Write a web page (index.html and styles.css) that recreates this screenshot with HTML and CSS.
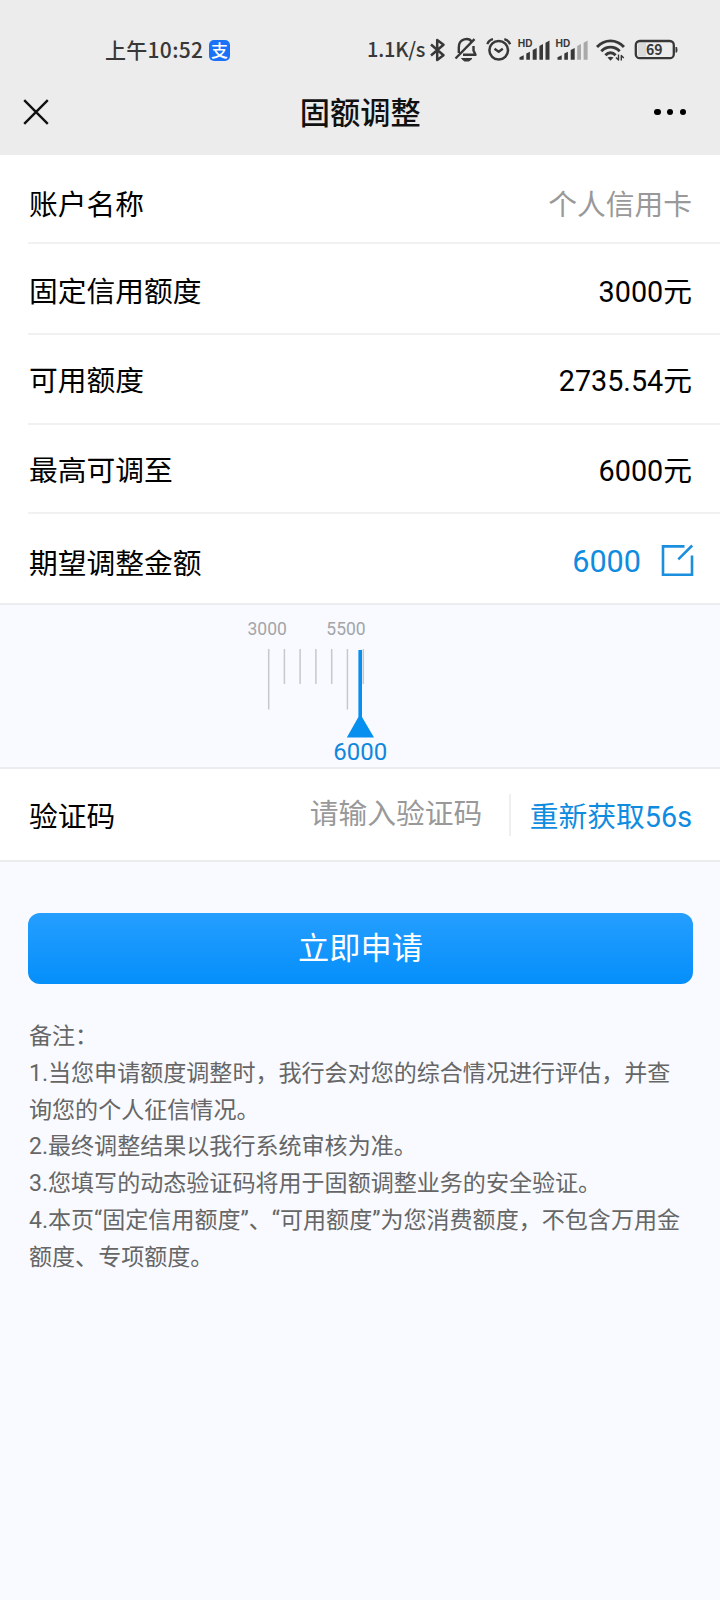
FILE: index.html
```html
<!DOCTYPE html>
<html lang="zh-CN">
<head>
<meta charset="utf-8">
<title>固额调整</title>
<link rel="stylesheet" href="styles.css">
</head>
<body>
<header class="top">
  <div class="status">
    <span class="time">上午10:52</span>
    <span class="pay-badge">支</span>
    <span class="speed">1.1K/s</span>
    <div class="status-icons">
      <svg class="ic" width="20" height="28" viewBox="428 36 20 28"><path d="M431 44.5 443.5 55.3 437.2 60V40L443.5 44.7 431 55.5" fill="none" stroke-width="2.5"/></svg>
      <svg class="ic bell" width="26" height="28" viewBox="453 36 26 28"><path d="M474.5 39.2 455.5 58.5M458.8 53V47.5C458.8 38 469 37.5 471.5 41.5M473.5 46V50.5L475.5 54.8H463" fill="none" stroke-width="2.4"/><path d="M461.5 58.5H472L469 61H464.5Z"/></svg>
      <svg class="ic alarm" width="28" height="28" viewBox="484 36 28 28"><circle cx="498.7" cy="50.3" r="9.3" fill="none" stroke-width="2.5"/><path d="M494.5 48.8 498.7 51.8 502.8 48.8M487.3 44.2C488.3 41.5 490.3 39.8 493 39.2M504.3 39.2C507 39.8 509 41.5 510.2 44.2" fill="none" stroke-width="2.3"/></svg>
      <svg class="ic sig" width="36" height="28" viewBox="516 36 36 28"><text x="517.8" y="46.6">HD</text><path d="M519.5 59.8v-2.5l4.2-2v4.5zM526.3 59.8v-6.4l3.6-1.6v8zM532.7 59.8v-9.8l4-2v11.8zM539.4 59.8v-13.8l3.6-2v15.8zM545.5 59.8v-17l4-2.2v19.2z" stroke="none"/></svg>
      <svg class="ic sig2" width="34" height="28" viewBox="554 36 34 28"><text x="555.6" y="46.6">HD</text><path d="M557.5 59.8v-2.5l4.2-2v4.5zM564.3 59.8v-6.4l3.6-1.6v8zM570.7 59.8v-9.8l4-2v11.8z" stroke="none"/><path class="faint" d="M577.2 59.8v-13.8l3.8-2v15.8zM583.6 59.8v-17l4-2.2v19.2z" stroke="none"/></svg>
      <svg class="ic wifi" width="30" height="28" viewBox="595 36 30 28"><path d="M597 47C604.5 38.8 616.5 38.8 624 47M601.3 51.2C606.5 45.8 614.5 45.8 619.7 51.2M605.4 55.2C608.5 52 612.5 52 615.6 55.2" fill="none" stroke-width="2.9"/><path d="M607.5 57.5Q610.5 55.8 613.5 57.5L610.5 60.7Z" stroke="none"/><path d="M616 57.5 618.5 60V54.5M621.3 60.5V55.5L623.8 58" fill="none" stroke-width="1.4"/></svg>
      <svg class="ic batt" width="45" height="28" viewBox="634 36 45 28"><path d="M638 42.5H646V56.5H638Z" fill="#dadada" stroke="none"/><rect x="635.8" y="41" width="38" height="17.2" rx="4" fill="none" stroke-width="2.3"/><path d="M675.5 47H677Q678 49.8 677 52.5H675.5Z" stroke="none"/><text class="pct" x="654.3" y="54.9" text-anchor="middle">69</text></svg>
    </div>
  </div>
  <div class="nav">
    <svg class="close" width="26" height="26" viewBox="0 0 26 26"><path d="M1.2 1.2 24.8 24.8M24.8 1.2 1.2 24.8"/></svg>
    <h1 class="title">固额调整</h1>
    <div class="more"><i></i><i></i><i></i></div>
  </div>
</header>
<main>
  <section class="list">
    <div class="row row-first"><span>账户名称</span><span class="muted">个人信用卡</span></div>
    <div class="row row-fixed"><span>固定信用额度</span><span>3000元</span></div>
    <div class="row row-avail"><span>可用额度</span><span>2735.54元</span></div>
    <div class="row row-max"><span>最高可调至</span><span>6000元</span></div>
    <div class="row row-wish"><span class="wish-label">期望调整金额</span>
      <span class="wish"><b>6000</b><svg width="34" height="34" viewBox="0 0 34 34"><path d="M24.5 2.4H3V30.8H32V11.5M18.3 15.3 32.2 1.5"/></svg></span></div>
  </section>
  <section class="ruler">
    <svg width="720" height="163" viewBox="0 605 720 163">
      <g class="scale"><text x="267.2" y="635">3000</text><text x="346" y="635">5500</text></g>
      <path class="ticks" d="M268.7 649V709.5M284.4 649V684M300.1 649V684M315.9 649V684M331.7 649V684M347.4 649V709.5M363.3 649V684"/>
      <path class="needle" d="M358.4 650H362V717L374 737.6H346.8L358.4 717Z"/>
      <text class="picked" x="360.3" y="760">6000</text>
    </svg>
  </section>
  <section class="code">
    <span class="code-label">验证码</span>
    <span class="code-input">请输入验证码</span>
    <span class="resend">重新获取56s</span>
  </section>
  <button class="apply">立即申请</button>
  <section class="notes">
    <p>备注：</p>
    <p>1.当您申请额度调整时，我行会对您的综合情况进行评估，并查<br>询您的个人征信情况。</p>
    <p>2.最终调整结果以我行系统审核为准。</p>
    <p>3.您填写的动态验证码将用于固额调整业务的安全验证。</p>
    <p>4.本页“固定信用额度”、“可用额度”为您消费额度，不包含万用金<br>额度、专项额度。</p>
  </section>
</main>
</body>
</html>
```
FILE: styles.css
```css
* { box-sizing: border-box; }
body {
  margin: 0;
  width: 720px;
  height: 1600px;
  overflow: hidden;
  background: #f8faff;
  color: #000;
  font-family: Roboto, "Noto Sans CJK SC", sans-serif;
  font-size: 28.75px;
}
.top { height: 155px; background: #ececec; }
.status {
  display: flex;
  align-items: center;
  height: 72px;
  padding: 28px 0 0 105px;
  color: #383838;
  font: 500 21px/42px "Noto Sans CJK SC", sans-serif;
  white-space: nowrap;
}
.time { width: 104px; padding-bottom: 2px; letter-spacing: 0.3px; }
.pay-badge {
  width: 21px;
  height: 21px;
  border-radius: 5px;
  background: #1b72f7;
  color: #fff;
  font-size: 17px;
  line-height: 20px;
  text-align: center;
}
.speed { width: 61px; margin-left: 137px; padding-bottom: 2px; font-size: 20px; letter-spacing: -0.2px; }
.status-icons { display: flex; height: 28px; }
.ic { flex: none; fill: #383838; stroke: #383838; stroke-linejoin: round; }
.bell { margin-left: 5px; }
.alarm { margin-left: 5px; }
.sig { margin-left: 4px; }
.sig2 { margin-left: 2px; }
.wifi { margin-left: 7px; }
.batt { margin-left: 9px; }
.ic text { font: 700 10px Inter, sans-serif; stroke: none; }
.ic .pct { font: 600 14px "Noto Sans CJK SC", sans-serif; }
.faint { fill: #a9a9a9; }
.nav {
  display: flex;
  align-items: center;
  justify-content: space-between;
  height: 80px;
  padding: 0 34px 0 23px;
}
.close { fill: none; stroke: #111; stroke-width: 2.4; }
.title { margin: 0 0 0 17px; padding-top: 3px; font-size: 30.2px; font-weight: 500; line-height: 44px; color: #111; }
.more { display: flex; gap: 6.2px; }
.more i { width: 6.4px; height: 6.4px; border-radius: 50%; background: #000; }
.list { height: 450px; padding-left: 28px; background: #fff; border-bottom: 2px solid #ececee; }
.row {
  display: flex;
  align-items: center;
  justify-content: space-between;
  height: 90px;
  padding: 0 28px 0 1px;
  border-bottom: 2px solid #f1f1f1;
  line-height: 42px;
}
.row-first { height: 89px; padding-top: 12px; }
.row-fixed { height: 91px; padding-top: 6px; }
.row-avail { padding-top: 4px; }
.row-max { height: 89px; padding-top: 4px; }
.row-wish { height: 89px; border: 0; padding-top: 4px; padding-right: 26px; }
.wish-label { padding-top: 6px; }
.muted { color: #999; }
.wish { display: flex; align-items: center; gap: 19px; color: #0f8ce0; }
.wish b { font-weight: 400; font-size: 30.6px; padding-top: 2px; }
.wish svg { fill: none; stroke: #1b8fde; stroke-width: 2.6; }
.ruler { height: 164px; border-bottom: 2px solid #ececf0; }
.ruler svg { display: block; }
.ruler text { text-anchor: middle; }
.scale { fill: #a3a5a8; font-size: 17.5px; }
.ticks { stroke: #c6c8cc; stroke-width: 1.5; }
.needle { fill: #078ff0; }
.picked { fill: #1087dc; font-size: 24px; }
.code {
  display: flex;
  align-items: center;
  height: 93px;
  padding: 1px 28px 0 29px;
  background: #fff;
  border-bottom: 2px solid #ececee;
  line-height: 42px;
}
.code-label { flex: 1; padding-top: 4px; }
.code-input { height: 42px; width: 201px; border-right: 2px solid #efefef; color: #999; line-height: 40px; }
.resend { margin-left: 19px; padding-top: 4px; color: #0f8ce0; }
.apply {
  display: block;
  width: 665px;
  height: 71px;
  margin: 51px 0 0 28px;
  padding: 1px 0 0;
  border: 0;
  border-radius: 12px;
  background: linear-gradient(#259eff, #058ffa);
  color: #fff;
  font: 31.2px/70px Roboto, "Noto Sans CJK SC", sans-serif;
}
.notes { padding: 35px 0 0 29px; color: #666; font-size: 23.05px; line-height: 36.75px; white-space: nowrap; }
.notes p { margin: 0; }
```
